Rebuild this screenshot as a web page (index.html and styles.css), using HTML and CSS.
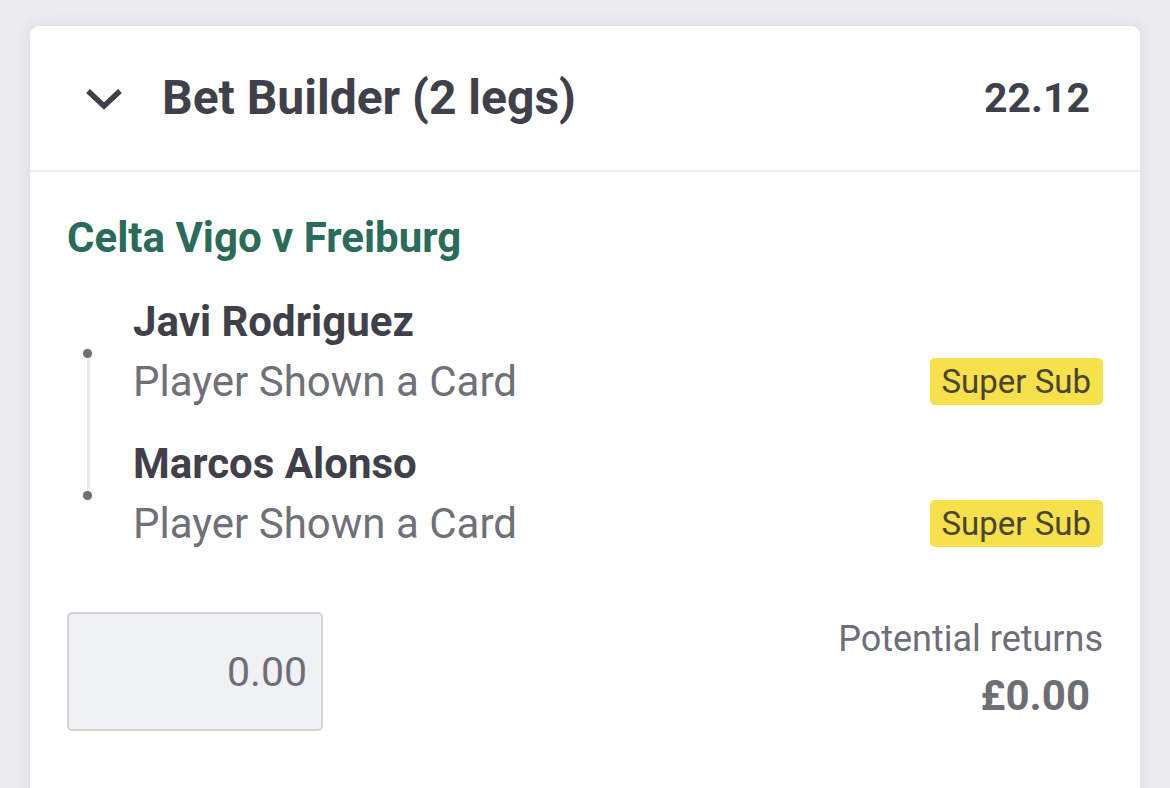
FILE: index.html
```html
<!DOCTYPE html>
<html lang="en">
<head>
<meta charset="utf-8">
<link rel="stylesheet" href="styles.css">
<title>Bet Builder</title>
</head>
<body>
<div class="page">
  <section class="card">
    <header class="card-head">
      <svg class="chevron" width="38" height="24" viewBox="0 0 38 24" aria-hidden="true">
        <path d="M3 4 L19 19 L35 4" fill="none" stroke="#3f3f49" stroke-width="5.5" stroke-linecap="butt" stroke-linejoin="miter"/>
      </svg>
      <h1 class="title">Bet Builder (2 legs)</h1>
      <span class="odds">22.12</span>
    </header>
    <div class="card-body">
      <h2 class="event">Celta Vigo v Freiburg</h2>
      <ul class="legs">
        <li class="leg">
          <div class="leg-name">Javi Rodriguez</div>
          <div class="leg-row">
            <span class="leg-market">Player Shown a Card</span>
            <span class="badge">Super Sub</span>
          </div>
        </li>
        <li class="leg">
          <div class="leg-name">Marcos Alonso</div>
          <div class="leg-row">
            <span class="leg-market">Player Shown a Card</span>
            <span class="badge">Super Sub</span>
          </div>
        </li>
      </ul>
      <div class="footer">
        <div class="stake">0.00</div>
        <div class="returns">
          <div class="returns-label">Potential returns</div>
          <div class="returns-value">£0.00</div>
        </div>
      </div>
    </div>
  </section>
</div>
</body>
</html>
```

FILE: styles.css
```css
* { box-sizing: border-box; }
html, body { margin: 0; padding: 0; }
body {
  width: 1170px;
  height: 788px;
  overflow: hidden;
  background: #ebebf0;
  font-family: Roboto, "Liberation Sans", sans-serif;
  color: #3f3f49;
}
.page {
  padding: 26px 30px 0 30px;
}
.card {
  background: #ffffff;
  border-radius: 9px 9px 0 0;
  box-shadow: 0 0 16px rgba(60, 60, 90, 0.09);
  height: 800px;
}
.card-head {
  display: flex;
  align-items: center;
  height: 146px;
  padding: 0 50px 0 55px;
  border-bottom: 2px solid #f0f0f5;
}
.chevron { flex: none; margin-top: 2px; }
.title {
  margin: 0 0 0 39px;
  flex: 1;
  font-size: 48px;
  font-weight: 700;
  color: #40404b;
  line-height: 1;
}
.odds {
  font-size: 41px;
  font-weight: 700;
  color: #40404b;
}
.card-body {
  padding: 42px 37px 0 37px;
}
.event {
  margin: 0;
  font-size: 42px;
  line-height: 48px;
  font-weight: 700;
  color: #2a6b59;
}
.legs {
  list-style: none;
  margin: 31px 0 0 0;
  padding: 0 0 0 66px;
  position: relative;
}
.legs::before {
  content: "";
  position: absolute;
  left: 20px;
  top: 60px;
  height: 145px;
  width: 3px;
  background: #e9e9ee;
}
.leg {
  position: relative;
  margin-bottom: 24px;
}
.leg + .leg { margin-top: 1px; }
.leg::before {
  content: "";
  position: absolute;
  left: -50px;
  top: 56px;
  width: 9px;
  height: 9px;
  border-radius: 50%;
  background: #6e6e78;
  box-shadow: 0 0 0 2px #f2f2f5;
}
.leg-name {
  font-size: 42px;
  line-height: 58px;
  font-weight: 700;
  color: #40404b;
}
.leg-row {
  display: flex;
  align-items: center;
  justify-content: space-between;
  height: 60px;
}
.leg-market {
  font-size: 42px;
  color: #707079;
}
.badge {
  background: #f6e04b;
  color: #4a4530;
  font-size: 33px;
  line-height: 47px;
  padding: 0 12px;
  border-radius: 5px;
}
.footer {
  display: flex;
  justify-content: space-between;
  align-items: flex-start;
  margin-top: 59px;
}
.stake {
  width: 256px;
  height: 119px;
  background: #f0f1f5;
  border: 2px solid #d4d4d8;
  border-radius: 5px;
  display: flex;
  align-items: center;
  justify-content: flex-end;
  padding-right: 14px;
  font-size: 41px;
  color: #6e6e76;
}
.returns {
  text-align: right;
  padding-top: 3px;
}
.returns-label {
  font-size: 36px;
  line-height: 48px;
  color: #6e6e78;
}
.returns-value {
  font-size: 42px;
  line-height: 66px;
  font-weight: 700;
  color: #6e6e76;
  padding-right: 13px;
}
```
